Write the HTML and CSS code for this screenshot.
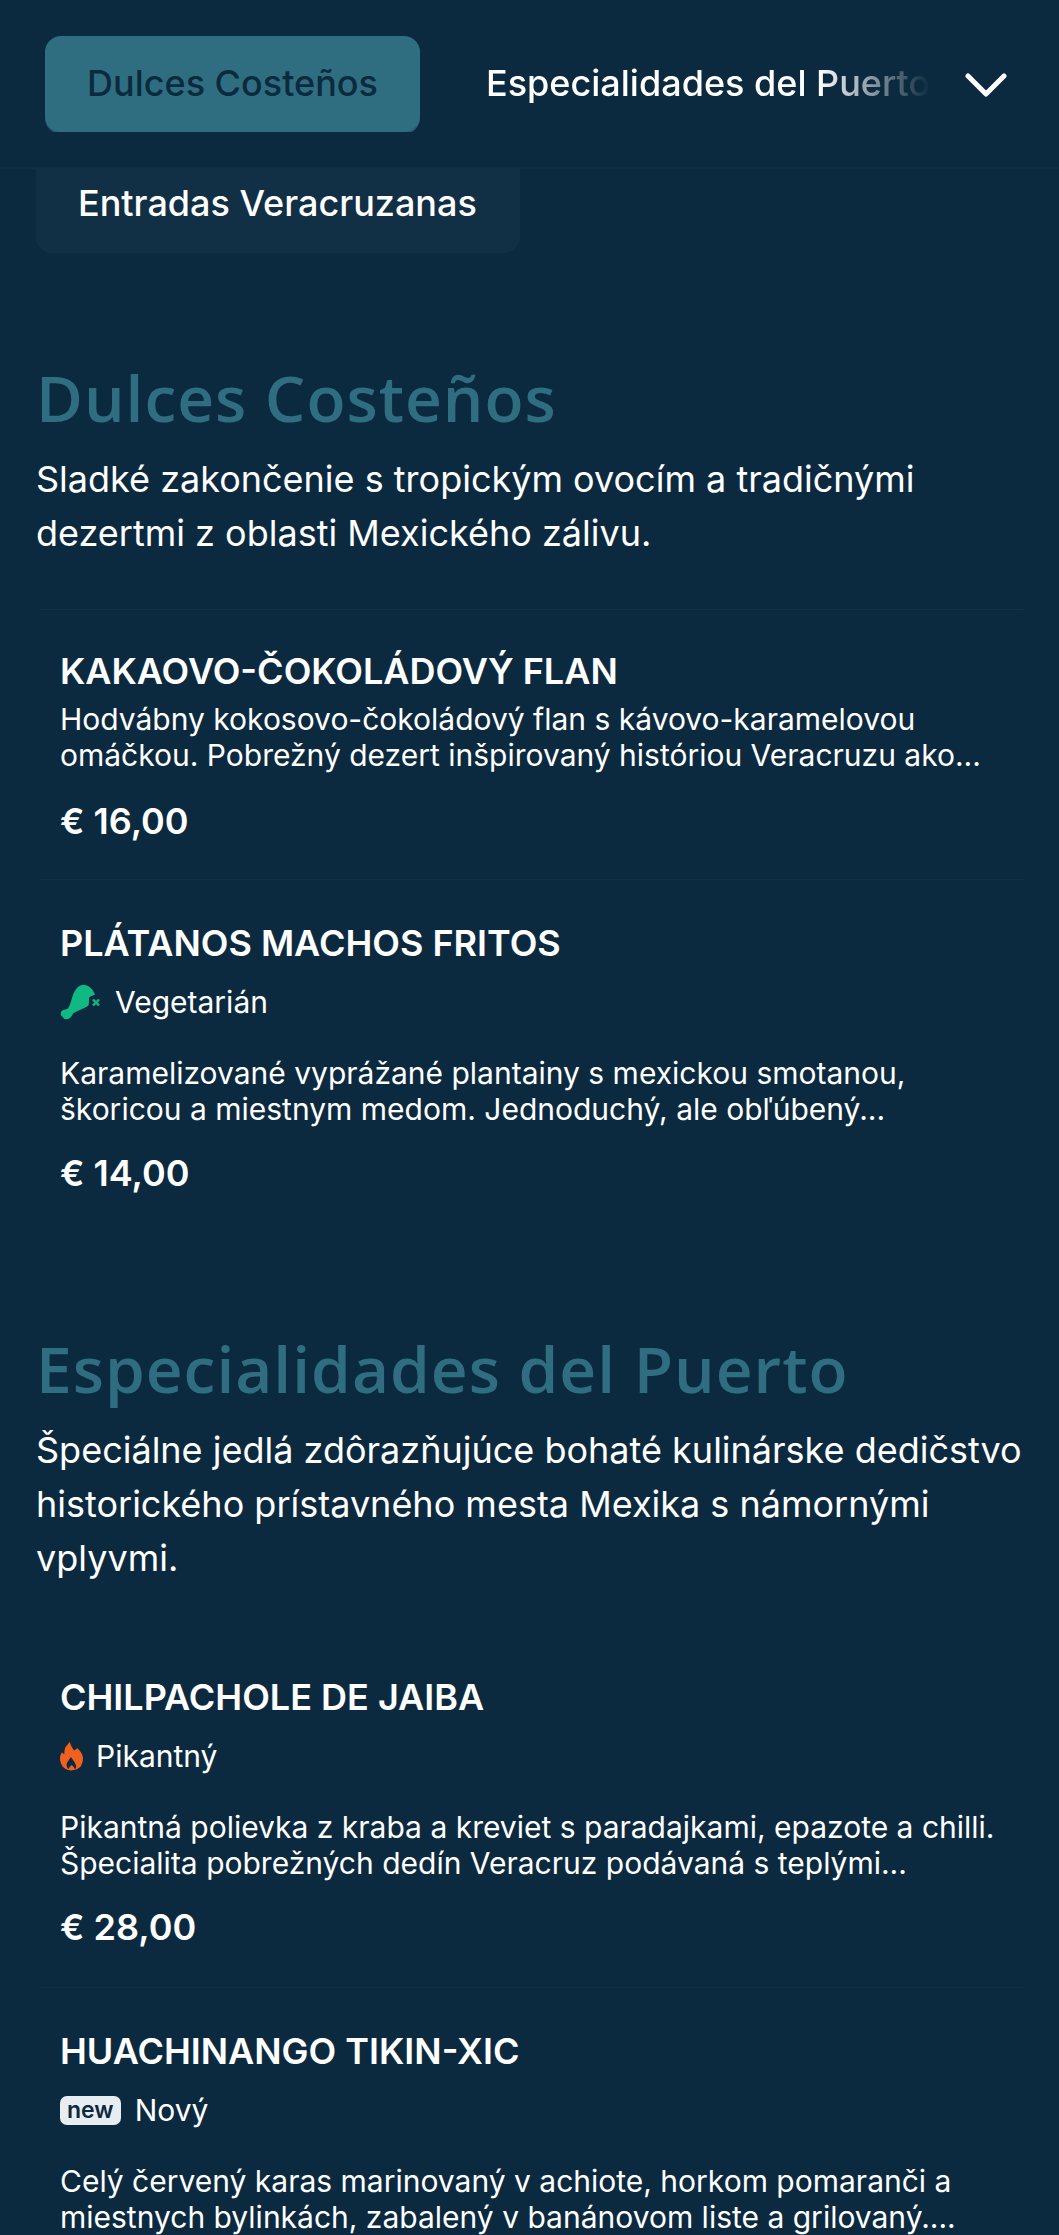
FILE: index.html
```html
<!DOCTYPE html>
<html lang="sk">
<head>
<meta charset="utf-8">
<title>Menu</title>
<link rel="stylesheet" href="styles.css">
</head>
<body>
<header class="topbar">
  <nav class="tabs">
    <a class="tab tab-active">Dulces Costeños</a>
    <a class="tab tab-faded">Especialidades del Puerto</a>
  </nav>
  <svg class="chevron" viewBox="0 0 42 26" aria-hidden="true"><path d="M3 4 L21 22 L39 4" fill="none" stroke="#fff" stroke-width="5" stroke-linecap="round" stroke-linejoin="round"/></svg>
</header>
<div class="overflow-tabs"><a class="tab tab-panel">Entradas Veracruzanas</a></div>
<main>
  <section class="section first">
    <h2>Dulces Costeños</h2>
    <p class="intro">Sladké zakončenie s tropickým ovocím a tradičnými dezertmi z oblasti Mexického zálivu.</p>
    <ul class="items ruled">
      <li class="item item-plain">
        <h3>KAKAOVO-ČOKOLÁDOVÝ FLAN</h3>
        <p class="desc tight">Hodvábny kokosovo-čokoládový flan s kávovo-karamelovou omáčkou. Pobrežný dezert inšpirovaný históriou Veracruzu ako...</p>
        <div class="price">€ 16,00</div>
      </li>
      <li class="item">
        <h3>PLÁTANOS MACHOS FRITOS</h3>
        <div class="tag">
          <svg class="ico-veg" viewBox="0 0 42 38" aria-hidden="true"><path d="M23.300 1.700 C29 2 33 6 35 11.700 C33 12.500 31 13 29.300 14.300 C28.500 17 29.500 20 28.300 22.700 C24 26 18 27 13.300 30.300 C12.500 31.500 12 33 10.700 34.300 C9 36 7 36.500 5 36 C3.500 35.500 3 34.800 2.700 33.700 C1.500 33 0.500 32 0.700 30.300 C1 28.500 2 27.500 3.300 27 C4.500 26.500 6 26.500 7.300 26 C9 24.500 10 22 10.700 19.300 C12 15 13 11 15 7.700 C17 4.500 20 1.800 23.300 1.700 Z" fill="#10b981"/><path d="M33 16.500 L39 22.500 M39 16.500 L33 22.500" stroke="#10b981" stroke-width="2.400" fill="none"/></svg>
          <span>Vegetarián</span>
        </div>
        <p class="desc">Karamelizované vyprážané plantainy s mexickou smotanou, škoricou a miestnym medom. Jednoduchý, ale obľúbený...</p>
        <div class="price">€ 14,00</div>
      </li>
    </ul>
  </section>
  <section class="section">
    <h2>Especialidades del Puerto</h2>
    <p class="intro">Špeciálne jedlá zdôrazňujúce bohaté kulinárske dedičstvo historického prístavného mesta Mexika s námornými vplyvmi.</p>
    <ul class="items">
      <li class="item">
        <h3>CHILPACHOLE DE JAIBA</h3>
        <div class="tag">
          <svg class="ico-fire" viewBox="0 0 24 30" aria-hidden="true"><path fill-rule="evenodd" d="M10.300 0 C11 3.500 12.800 6.500 14.700 9.300 C16 8.800 17.200 8 18 6.700 C21.500 10 24 13.500 24 17.700 C24 20.500 23 23.500 21.600 26 C19 28.800 15 30 11.300 30 C7.800 30 4.800 28.500 2.700 26 C1 23.500 0 20.500 0 17.700 C0 15 0.800 13 2 11 C2.800 12 3.500 12.800 4.500 13.300 C4.500 10.500 4.800 8 5.500 6 C7 4 9 2 10.300 0 Z M11.300 16 C10 18.500 7.800 20.500 6.900 23.300 C6.500 25.300 7.500 27.300 8.900 28.700 C9.300 27 10.500 25.500 12.300 24.300 C13.800 25.500 15 27 15.800 28.700 C16.800 27.300 17.300 25.800 16.500 24.300 C15.500 21 13 18.500 11.300 16 Z" fill="#f2601f"/></svg>
          <span>Pikantný</span>
        </div>
        <p class="desc">Pikantná polievka z kraba a kreviet s paradajkami, epazote a chilli. Špecialita pobrežných dedín Veracruz podávaná s teplými...</p>
        <div class="price">€ 28,00</div>
      </li>
      <li class="item">
        <h3>HUACHINANGO TIKIN-XIC</h3>
        <div class="tag tag-badge">
          <span class="badge">new</span>
          <span>Nový</span>
        </div>
        <p class="desc">Celý červený karas marinovaný v achiote, horkom pomaranči a miestnych bylinkách, zabalený v banánovom liste a grilovaný....</p>
      </li>
    </ul>
  </section>
</main>
</body>
</html>
```
FILE: styles.css
```css
* { box-sizing: border-box; }
html, body { margin: 0; padding: 0; height: 2235px; overflow: hidden; background: #0c2a3f; }
body { font-family: Inter, "Liberation Sans", sans-serif; color: #fff; }
h2, h3, p, ul { margin: 0; padding: 0; }
ul { list-style: none; }

.topbar {
  height: 169px;
  display: flex;
  align-items: flex-start;
  border-bottom: 2px solid #102e44;
  padding: 36px 52px 0 45px;
}
.tabs { display: flex; gap: 66px; flex: 1; min-width: 0; overflow: hidden; }
.tab { font-size: 36px; font-weight: 500; line-height: 94px; padding: 0 42px; white-space: nowrap; border-radius: 16px; display: block; }
.tab-active { flex: none; height: 96px; background: #2f6e81; color: #0c2a3f; box-shadow: 0 2px 0 #265c6e; }
.tab-faded {
  -webkit-mask-image: linear-gradient(90deg, #000 75%, transparent 100%);
  mask-image: linear-gradient(90deg, #000 75%, transparent 100%);
  padding: 0;
  flex: none;
}
.chevron { width: 42px; height: 26px; margin-top: 36px; flex: none; margin-left: 30px; }
.overflow-tabs { padding: 0 36px; }
.tab-panel { background: #112f45; width: 484px; height: 84px; line-height: 68px; border-radius: 0 0 16px 16px; color: #fff; padding: 0 42px; }

.section { padding: 0 36px; margin-top: 100px; }
.section.first { margin-top: 109px; }
h2 { font-family: "Open Sans", Lato, sans-serif; font-weight: 600; font-size: 64px; letter-spacing: 1px; line-height: 72px; color: #2f6e81; }
.intro { font-size: 36px; line-height: 54px; margin-top: 18px; }
.items { margin: 49px 0 0 4px; }
.items.ruled { border-top: 1px solid #133148; }
.item { padding: 38.500px 20px 36px; border-bottom: 1px solid #112f45; }
.item:last-child { border-bottom: 0; }
.item-plain { padding-top: 37px; padding-bottom: 34.500px; }
.item-plain .price { margin-top: 23.500px; }
h3 { font-size: 36px; font-weight: 600; line-height: 48px; }
.desc { font-size: 30px; line-height: 36px; }
.desc.tight { margin-top: 6px; }
.price { font-size: 36px; font-weight: 600; line-height: 48px; margin-top: 22px; }
.tag { display: flex; align-items: center; gap: 13px; font-size: 30px; line-height: 40px; margin: 15.500px 0 33px; }
.tag-badge { gap: 14px; }
.ico-veg { width: 42px; height: 38px; }
.ico-fire { width: 23px; height: 30px; }
.badge { background: #e8edf1; color: #0c2a3f; font-size: 23px; font-weight: 600; line-height: 29px; padding: 0 7px; border-radius: 7px; }
```
